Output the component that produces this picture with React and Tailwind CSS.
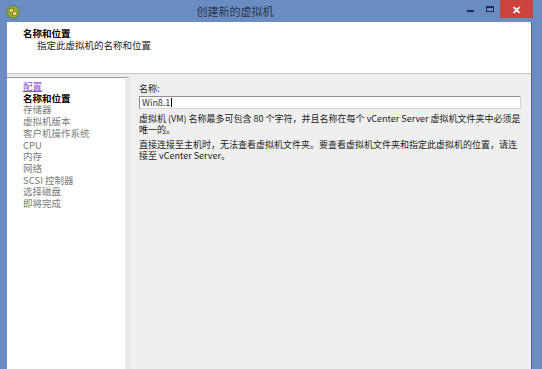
import React from 'react';

const font = { fontFamily: '"Noto Sans CJK SC", "Liberation Sans", sans-serif' };

const navItems = [
  '名称和位置',
  '存储器',
  '虚拟机版本',
  '客户机操作系统',
  'CPU',
  '内存',
  '网络',
  'SCSI 控制器',
  '选择磁盘',
  '即将完成',
];

function AppIcon() {
  return (
    <svg width="14" height="14" viewBox="0 0 14 14">
      <circle cx="7" cy="7" r="6.2" fill="#8fae3c" stroke="#5c7a1e" strokeWidth="0.8" />
      <rect x="3.5" y="3.5" width="4" height="4" fill="#f3d66a" stroke="#6d6a20" strokeWidth="0.6" />
      <rect x="6.5" y="6.5" width="4" height="4" fill="#f3d66a" stroke="#6d6a20" strokeWidth="0.6" />
    </svg>
  );
}

export default function App() {
  return (
    <div className="w-[542px] h-[369px] overflow-hidden bg-[#6b8cc3] flex flex-col" style={font}>
      {/* title bar */}
      <div className="h-[22px] flex items-center relative shrink-0">
        <div className="pl-[6px] pt-[1px]">
          <AppIcon />
        </div>
        <div className="flex-1 text-center text-[11px] text-[#2b3550] leading-none pr-[10px]">创建新的虚拟机</div>
        <div className="flex items-start h-full self-start">
          <div className="w-[20px] h-[18px] flex items-center justify-center">
            <div className="w-[7px] h-[2px] bg-[#1e2f4f] mt-[4px]" />
          </div>
          <div className="w-[20px] h-[18px] flex items-center justify-center">
            <div className="w-[8px] h-[6px] border border-[#1e2f4f] border-t-2" />
          </div>
          <div className="w-[33px] h-[18px] bg-[#c9443c] flex items-center justify-center text-white text-[11px] font-bold leading-none mr-[9px]">
            ✕
          </div>
        </div>
      </div>

      {/* window body */}
      <div className="flex-1 min-h-0 mx-[7px] mr-[10px] bg-white flex flex-col border-r border-[#4c6590]">
        {/* header */}
        <div className="h-[51px] shrink-0 pt-[5px] pl-[16px] text-[9.5px] leading-[12px] text-black">
          <div className="font-bold">名称和位置</div>
          <div className="pl-[14px] text-[#222]">指定此虚拟机的名称和位置</div>
        </div>
        <div className="h-[1px] bg-[#c8c8c8]" />
        <div className="h-[3px] bg-[#ececec]" />

        <div className="flex-1 flex bg-[#efefef]">
          {/* nav */}
          <div className="w-[123px] shrink-0 bg-white border-t border-[#9a9a9a] border-r-[5px] border-r-[#e9e9e9] pt-[3px] pl-[16px] text-[9.5px] leading-[11.7px] text-[#7a7a7a]">
            <div className="text-[#8a4fd6] underline">配置</div>
            {navItems.map((item, i) => (
              <div key={item} className={i === 0 ? 'font-bold text-black' : ''}>
                {item}
              </div>
            ))}
          </div>

          {/* content */}
          <div className="flex-1 min-w-0 pl-[9px] pr-[10px] pt-[6px] text-[9px] text-[#222]">
            <div className="leading-[12px]">名称:</div>
            <div className="mt-[1px] h-[13px] bg-white border border-[#8f8f8f] border-b-[#d6d6d6] border-r-[#d6d6d6] flex items-center pl-[2px] text-[9px] text-[#333] leading-none">
              Win8.1<span className="w-[1px] h-[9px] bg-black ml-[1px]" />
            </div>
            <div className="mt-[5px] leading-[10.5px] whitespace-nowrap">
              虚拟机 (VM) 名称最多可包含 80 个字符，并且名称在每个 vCenter Server 虚拟机文件夹中必须是
              <br />
              唯一的。
            </div>
            <div className="mt-[5px] leading-[10.5px] whitespace-nowrap">
              直接连接至主机时，无法查看虚拟机文件夹。要查看虚拟机文件夹和指定此虚拟机的位置，请连
              <br />
              接至 vCenter Server。
            </div>
          </div>
        </div>
      </div>
    </div>
  );
}
